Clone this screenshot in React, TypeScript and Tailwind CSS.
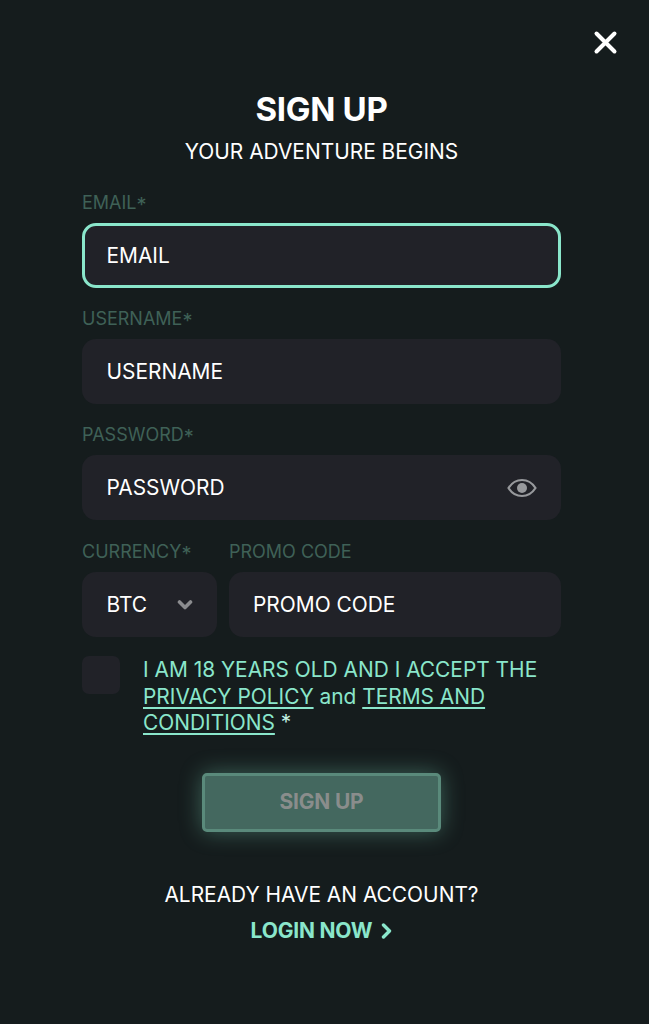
import React from "react";

function Label({ text, star }: { text: string; star?: boolean }) {
  return (
    <div className="h-[24px] flex items-center text-[18px] leading-[24px] text-[#3f6157] whitespace-nowrap">
      {text}
      {star && <span className="text-[20px] leading-[24px] translate-y-[2px] inline-block">*</span>}
    </div>
  );
}

function Field({ label, value, focused, icon }: { label: string; value: string; focused?: boolean; icon?: React.ReactNode }) {
  return (
    <div className="flex flex-col gap-[8px]">
      <Label text={label} star />
      <div
        className={
          focused
            ? "h-[65px] rounded-[14px] bg-[#212228] border-[3px] border-[#8ae6cb] flex items-center pl-[21.500px] text-[20.900px] text-white"
            : "h-[65px] rounded-[14px] bg-[#212228] flex items-center justify-between pl-[24.500px] pr-[24px] text-[20.900px] text-white"
        }
      >
        <span>{value}</span>
        {icon}
      </div>
    </div>
  );
}

export default function App() {
  return (
    <div className="relative w-[649px] h-[1024px] overflow-hidden bg-[#151c1d] font-['Inter',sans-serif]">
      <button className="absolute left-[593px] top-[30px] w-[25px] h-[25px] text-white">
        <svg viewBox="0 0 25 25" className="w-full h-full" fill="none" stroke="currentColor" strokeWidth="4" strokeLinecap="round">
          <path d="M3.500 3.500L21.500 21.500M21.500 3.500L3.500 21.500" />
        </svg>
      </button>

      <div className="flex flex-col pt-[91px] pl-[82px] w-[561px]">
        <h1 className="text-center text-[33px] leading-[36px] font-bold text-white tracking-[-0.3px]">SIGN UP</h1>
        <p className="text-center text-[20.900px] leading-[28px] text-white mt-[11px]">YOUR ADVENTURE BEGINS</p>

        <div className="flex flex-col gap-[20px] mt-[25px]">
          <div className="flex flex-col gap-[19px]">
            <Field label="EMAIL" value="EMAIL" focused />
            <Field label="USERNAME" value="USERNAME" />
            <Field
              label="PASSWORD"
              value="PASSWORD"
              icon={
                <svg width="30" height="20" viewBox="0 0 30 20" fill="none" className="text-[#97999c]">
                  <path d="M1.500 10C5 4.500 9.500 2 15 2s10 2.500 13.500 8C25 15.500 20.500 18 15 18S5 15.500 1.500 10Z" stroke="currentColor" strokeWidth="2.200" />
                  <circle cx="15" cy="10" r="5" fill="currentColor" />
                </svg>
              }
            />
          </div>
          <div className="flex gap-[12px]">
            <div className="w-[135px] flex flex-col gap-[8px]">
              <Label text="CURRENCY" star />
              <div className="h-[65px] rounded-[14px] bg-[#212228] flex items-center justify-between pl-[24.500px] pr-[24px] text-[20.900px] text-white">
                <span>BTC</span>
                <svg width="16" height="12" viewBox="0 0 16 12" fill="none" stroke="#8b8c8f" strokeWidth="3.600" strokeLinecap="round" strokeLinejoin="round">
                  <path d="M2.500 3L8 8.500L13.500 3" />
                </svg>
              </div>
            </div>
            <div className="flex-1 flex flex-col gap-[8px]">
              <Label text="PROMO CODE" />
              <div className="h-[65px] rounded-[14px] bg-[#212228] flex items-center pl-[24px] text-[20.900px] text-white">
                PROMO CODE
              </div>
            </div>
          </div>
        </div>

        <div className="flex gap-[23px] mt-[19px]">
          <div className="w-[38px] h-[38px] shrink-0 rounded-[7px] bg-[#212228]" />
          <p className="text-[20.900px] leading-[26.500px] text-[#8ae6cb] pt-[1px] whitespace-nowrap">
            I AM 18 YEARS OLD AND I ACCEPT THE
            <br />
            <a className="underline underline-offset-[3px] decoration-[1.500px]">PRIVACY POLICY</a> and{" "}
            <a className="underline underline-offset-[3px] decoration-[1.500px]">TERMS AND</a>
            <br />
            <a className="underline underline-offset-[3px] decoration-[1.500px]">CONDITIONS</a> <span className="text-[#c4f1e3]">*</span>
          </p>
        </div>

        <button className="self-center mt-[36px] w-[239px] h-[59px] rounded-[5px] bg-[#44685f] border-[3px] border-[#5a8a7b] shadow-[0_0_22px_rgba(134,229,199,0.35)] text-[21px] font-bold text-[#8a8d8c] tracking-[-0.2px]">
          SIGN UP
        </button>

        <p className="text-center text-[20.900px] leading-[28px] text-white mt-[49px]">ALREADY HAVE AN ACCOUNT?</p>
        <div className="flex items-center justify-center gap-[9px] mt-[8px] text-[21px] leading-[28px] font-bold text-[#8ae6cb] tracking-[-0.2px]">
          <span>LOGIN NOW</span>
          <svg width="11" height="16" viewBox="0 0 11 16" fill="none" stroke="currentColor" strokeWidth="3.400" strokeLinecap="round" strokeLinejoin="round">
            <path d="M2.500 2L8.500 8L2.500 14" />
          </svg>
        </div>
      </div>
    </div>
  );
}
